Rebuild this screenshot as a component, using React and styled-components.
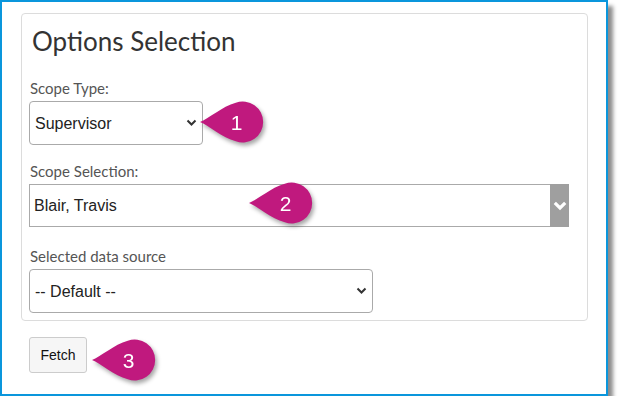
import React, { useState } from 'react'
import styled, { createGlobalStyle } from 'styled-components'

const GlobalStyle = createGlobalStyle`
  html, body {
    margin: 0;
    padding: 0;
    background: #fff;
  }
  body {
    font-family: Lato, 'Open Sans', sans-serif;
  }
`

const Frame = styled.div`
  position: relative;
  box-sizing: border-box;
  width: 608px;
  height: 396px;
  border: 2px solid #0a96dc;
  background: #fff;
  box-shadow: 5px 6px 4px rgba(0, 0, 0, 0.45);
  padding: 11px 0 0 19px;
`

const Card = styled.section`
  box-sizing: border-box;
  width: 567px;
  height: 308px;
  border: 1px solid #dcdcdc;
  border-radius: 4px;
  padding: 12px 7px 7px 7px;
`

const Title = styled.h2`
  margin: 0 0 22px 0;
  padding-left: 3px;
  font-family: Lato, 'Open Sans', sans-serif;
  font-weight: 400;
  font-size: 26px;
  line-height: 31px;
  color: #333;
`

const Group = styled.div`
  margin-bottom: ${(p) => p.$gap}px;
`

const Label = styled.label`
  display: block;
  margin: 0 0 4px 1px;
  font-family: Lato, 'Open Sans', sans-serif;
  font-size: 15px;
  line-height: 18px;
  color: #555;
`

const SelectWrap = styled.div`
  position: relative;
  width: ${(p) => p.$width}px;
`

const Select = styled.select`
  appearance: none;
  -webkit-appearance: none;
  box-sizing: border-box;
  width: 100%;
  height: 44px;
  margin: 0;
  padding: 1px 30px 0 5px;
  border: 1px solid #aaa;
  border-radius: 4px;
  background: #fff;
  font-family: 'Liberation Sans', Arial, sans-serif;
  font-size: 16px;
  color: #222;
  outline: none;
`

const Chevron = styled.svg`
  position: absolute;
  right: 6px;
  top: 50%;
  margin-top: -4px;
  width: 11px;
  height: 8px;
  pointer-events: none;
`

const Chosen = styled.div`
  display: flex;
  width: 540px;
  height: 43px;
`

const ChosenValue = styled.div`
  flex: 1;
  display: flex;
  align-items: center;
  box-sizing: border-box;
  padding: 1px 0 0 4px;
  border: 1px solid #aaa;
  border-right: none;
  font-family: 'Liberation Sans', Arial, sans-serif;
  font-size: 16px;
  color: #222;
`

const ChosenArrow = styled.div`
  width: 19px;
  display: flex;
  align-items: center;
  justify-content: center;
  background: #9f9f9f;
`

const FetchButton = styled.button`
  box-sizing: border-box;
  width: 58px;
  height: 36px;
  margin: 16px 0 0 8px;
  padding: 0;
  border: 1px solid #ccc;
  border-radius: 3px;
  background: #f6f6f6;
  font-family: 'Liberation Sans', Arial, sans-serif;
  font-size: 14px;
  color: #111;
  cursor: pointer;
`

const Marker = styled.svg`
  position: absolute;
  left: ${(p) => p.$x}px;
  top: ${(p) => p.$y}px;
  width: 66px;
  height: 48px;
  overflow: visible;
  filter: drop-shadow(2px 3px 2px rgba(0, 0, 0, 0.35));
`

const Step = ({ x, y, n }) => (
  <Marker $x={x} $y={y} viewBox='0 0 66 48'>
    <path
      d='M0,20 C8,17 22.3,4.3 35.8,0.68 A20.5,20.5 0 1 1 35.8,39.32 C22.3,35.7 8,23 0,20 Z'
      fill='#c0197e'
    />
    <text
      x='36.5'
      y='27.5'
      textAnchor='middle'
      fill='#fff'
      fontFamily="'Liberation Sans', Arial, sans-serif"
      fontSize='21'
    >
      {n}
    </text>
  </Marker>
)

const DownArrow = () => (
  <Chevron viewBox='0 0 11 8'>
    <path d='M1.5,1.5 L5.5,5.5 L9.5,1.5' fill='none' stroke='#333' strokeWidth='2' />
  </Chevron>
)

const App = () => {
  const [scopeType, setScopeType] = useState('supervisor')
  const [source, setSource] = useState('default')

  return (
    <>
      <GlobalStyle />
      <Frame>
        <Card>
          <Title>Options Selection</Title>

          <Group $gap={17}>
            <Label htmlFor='scopeType'>Scope Type:</Label>
            <SelectWrap $width={174}>
              <Select
                id='scopeType'
                value={scopeType}
                onChange={(e) => setScopeType(e.target.value)}
              >
                <option value='supervisor'>Supervisor</option>
                <option value='department'>Department</option>
                <option value='employee'>Employee</option>
              </Select>
              <DownArrow />
            </SelectWrap>
          </Group>

          <Group $gap={20}>
            <Label>Scope Selection:</Label>
            <Chosen>
              <ChosenValue>Blair, Travis</ChosenValue>
              <ChosenArrow>
                <svg width='14' height='10' viewBox='0 0 14 10'>
                  <path d='M1.8,1.8 L7,7 L12.2,1.8' fill='none' stroke='#fff' strokeWidth='3.2' />
                </svg>
              </ChosenArrow>
            </Chosen>
          </Group>

          <Group $gap={0}>
            <Label htmlFor='source'>Selected data source</Label>
            <SelectWrap $width={344}>
              <Select
                id='source'
                value={source}
                onChange={(e) => setSource(e.target.value)}
              >
                <option value='default'>-- Default --</option>
              </Select>
              <DownArrow />
            </SelectWrap>
          </Group>
        </Card>

        <FetchButton type='button'>Fetch</FetchButton>

        <Step x={198} y={100} n='1' />
        <Step x={247} y={181} n='2' />
        <Step x={90} y={338} n='3' />
      </Frame>
    </>
  )
}

export default App
